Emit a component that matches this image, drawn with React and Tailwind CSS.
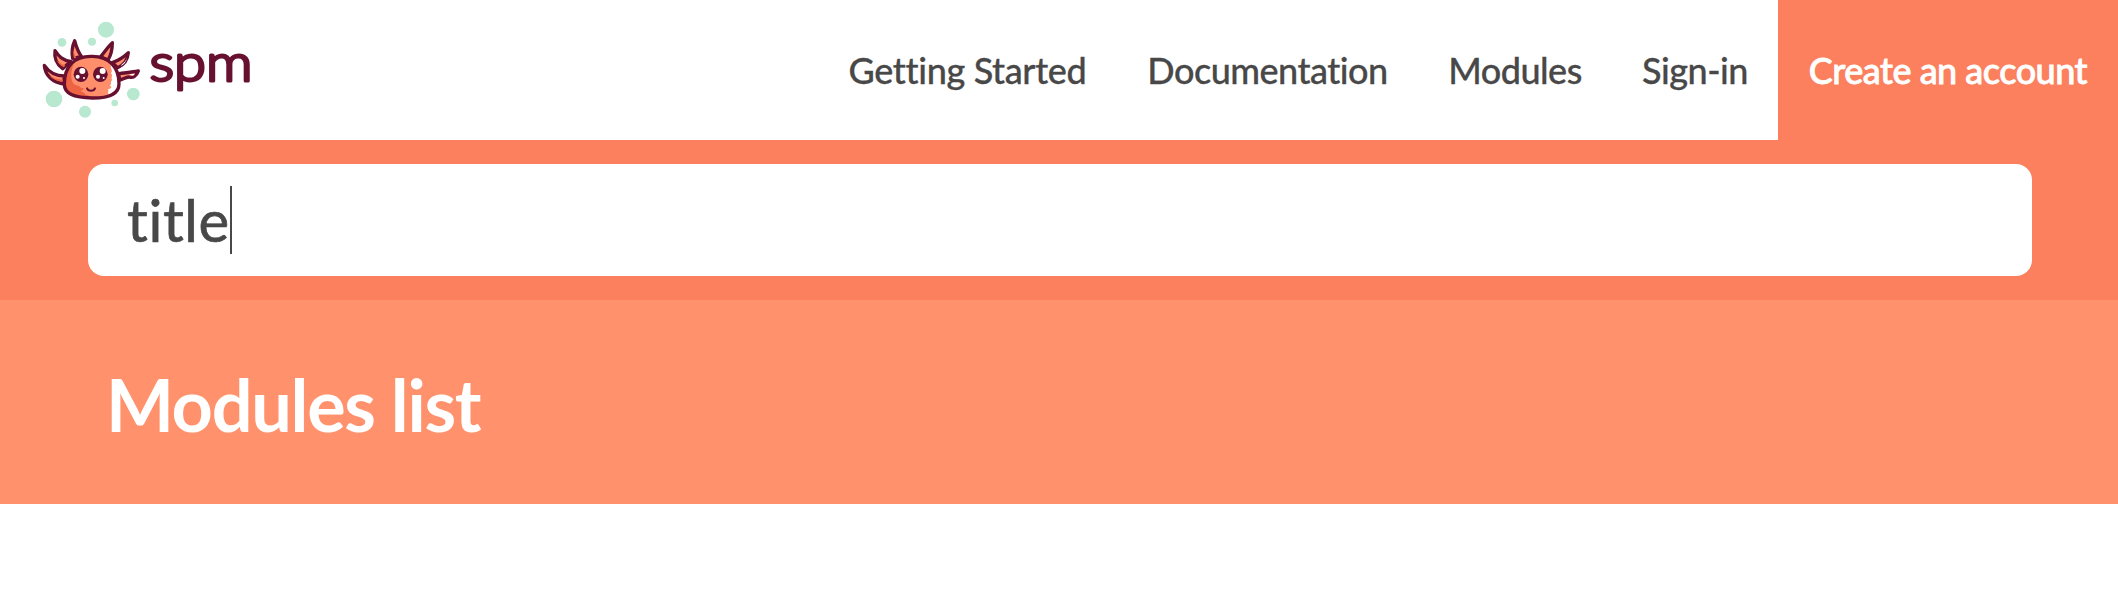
function Axolotl() {
  return (
    <svg viewBox="0 0 360 360" className="size-[120px] shrink-0" aria-hidden="true">
      <g fill="#b8e8d0">
        <circle cx="228" cy="59" r="24" />
        <circle cx="96" cy="97" r="13" />
        <circle cx="186" cy="95" r="12" />
        <circle cx="72" cy="267" r="25" />
        <circle cx="165" cy="305" r="18" />
        <circle cx="254" cy="279" r="10" />
        <circle cx="310" cy="252" r="19" />
      </g>
      <g fill="#ff8f6b" stroke="#67102f" strokeWidth="10" strokeLinejoin="round" strokeLinecap="round">
        <path d="M128 145C124 124 127 108 134 92C139 111 143 125 155 140Z" />
        <path d="M212 140C226 124 234 109 247 98C247 119 243 135 234 150Z" />
        <path d="M98 176C81 163 72 143 75 122C87 140 98 151 122 154Z" />
        <path d="M247 158C266 151 280 142 295 128C293 151 282 165 263 173Z" />
        <path d="M101 222C69 218 45 197 43 166C58 188 77 198 103 198Z" />
        <path d="M266 191C287 188 305 187 325 183C319 200 308 205 297 201C287 201 278 208 269 210Z" />
      </g>
      <path d="M276 163C284 158 289 151 291 142C289 156 282 165 272 168Z" fill="#fff" />
      <path d="M297 193L315 191L309 197Z" fill="#fff" />
      <path d="M57 197C70 208 84 213 100 215L100 209C83 208 69 204 57 197ZM80 149C84 160 91 167 102 172L106 166C95 163 88 158 80 149ZM130 117C129 128 130 136 132 145L139 143C134 135 132 127 130 117Z" fill="#ed6343" />
      <path d="M187 139C132 137 103 170 103 223C103 253 137 264 188 264C235 264 267 251 267 221C267 172 239 140 187 139Z" fill="#ff8f6b" />
      <path d="M143 148C115 162 103 190 103 223C103 253 137 264 188 264C178 260 176 255 165 253C165 246 154 249 152 241C165 242 162 231 153 235C151 226 139 228 132 222C119 211 122 164 143 148Z" fill="#ed6343" />
      <path d="M223 146C232 151 235 159 243 166C240 177 251 183 242 190C252 197 240 203 247 210C238 216 248 222 239 227C249 229 241 238 234 237C238 245 231 248 237 254C255 248 267 239 267 221C267 182 251 155 223 146Z" fill="#fff" />
      <path d="M187 139C132 137 103 170 103 223C103 253 137 264 188 264C235 264 267 251 267 221C267 172 239 140 187 139Z" fill="none" stroke="#67102f" strokeWidth="10" />
      <ellipse cx="153" cy="193" rx="22" ry="23" fill="#67102f" />
      <ellipse cx="211" cy="193" rx="22" ry="23" fill="#67102f" />
      <g fill="#fff">
        <circle cx="157" cy="183" r="9" />
        <circle cx="218" cy="183" r="9" />
        <circle cx="143" cy="200" r="6" />
        <circle cx="204" cy="200" r="6" />
        <circle cx="162" cy="204" r="3" />
        <circle cx="221" cy="204" r="3" />
      </g>
      <path d="M171 235C174 245 192 245 195 235" fill="none" stroke="#67102f" strokeWidth="6" strokeLinecap="round" />
    </svg>
  );
}

const links = [
  { label: "Getting Started", width: "w-[299px]", tracking: "tracking-[-0.35px]" },
  { label: "Documentation", width: "w-[301px]", tracking: "tracking-[-0.5px]" },
  { label: "Modules", width: "w-[194px]", tracking: "tracking-[-0.5px]" },
  { label: "Sign-in", width: "w-[166px]", tracking: "tracking-[-0.5px]" },
];

export default function App() {
  return (
    <div className="min-h-[590px] bg-white font-['Lato',sans-serif] text-[#484848]">
      <header className="flex h-[140px] justify-between">
        <a className="flex items-start pt-[10px] pl-[30px]">
          <Axolotl />
          <svg width="120" height="100" className="shrink-0" role="img" aria-label="spm">
            <text x="-0.5" y="71" textLength="103" lengthAdjust="spacingAndGlyphs" fontSize="51.5" fill="#67102f" stroke="#67102f" strokeWidth="3" strokeLinejoin="round" className="font-['Lato',sans-serif] font-light">spm</text>
          </svg>
        </a>
        <nav className="flex text-[36px] font-medium whitespace-nowrap [-webkit-text-stroke:0.3px_currentColor]">
          {links.map(({ label, width, tracking }) => (
            <a key={label} className={`${width} ${tracking} flex items-center justify-center`}>
              {label}
            </a>
          ))}
          <a className="flex w-[340px] items-center justify-center bg-[#fc805d] tracking-[-0.5px] text-white [-webkit-text-stroke:0.8px_currentColor]">
            Create an account
          </a>
        </nav>
      </header>
      <section className="h-[160px] bg-[#fc805d] pt-6 pr-[86px] pl-[88px]">
        <div className="flex h-28 items-center rounded-2xl bg-white pl-[39px]">
          <span className="w-[103px] text-[58px] leading-[68px] tracking-[0.6px] [font-variant-ligatures:none] [-webkit-text-stroke:0.7px_currentColor]">title</span>
          <span className="h-[68px] w-[2px] bg-[#484848]" />
        </div>
      </section>
      <section className="flex h-[204px] items-center bg-[#ff926c] pt-[3px] pl-[106px]">
        <h1 className="text-[72px] font-bold tracking-[-1.3px] text-white">Modules list</h1>
      </section>
    </div>
  );
}
